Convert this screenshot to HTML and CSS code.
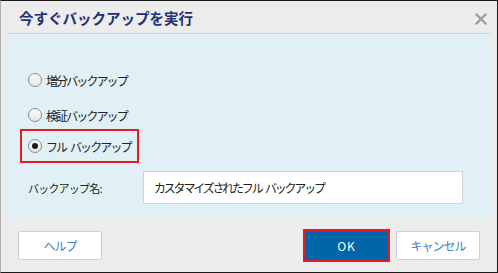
FILE: index.html
```html
<!DOCTYPE html>
<html lang="ja">
<head>
    <meta charset="UTF-8">
    <title>今すぐバックアップを実行</title>
    <link rel="stylesheet" href="styles.css">
</head>
<body>
    <div class="dialog">
        <div class="titlebar">
            <h1>今すぐバックアップを実行</h1>
            <span class="close">
                <svg width="12" height="12" viewBox="0 0 12 12">
                    <path d="M1.5 1.5 L10.5 10.5 M10.5 1.5 L1.5 10.5" stroke="#9a9a9a" stroke-width="2.2" stroke-linecap="square"/>
                </svg>
            </span>
        </div>

        <div class="content">
            <label class="opcion"><span class="radio"></span>増分バックアップ</label>
            <label class="opcion"><span class="radio"></span>検証バックアップ</label>
            <label class="opcion marcada"><span class="radio activo"></span>フル バックアップ</label>

            <div class="nombre">
                <span class="etiqueta">バックアップ名:</span>
                <div class="campo">カスタマイズされたフル バックアップ</div>
            </div>
        </div>

        <div class="footer">
            <button class="btn">ヘルプ</button>
            <div class="derecha">
                <div class="marco-ok"><button class="btn ok">OK</button></div>
                <button class="btn">キャンセル</button>
            </div>
        </div>
    </div>
</body>
</html>
```

FILE: styles.css
```css
body {
    margin: 0;
    font-family: "Noto Sans CJK JP", "Noto Sans", sans-serif;
}

.dialog {
    width: 496px;
    height: 271px;
    background-color: #ececec;
    border: 1px solid #1a1a1a;
    border-left-color: #b0b0b0;
    display: flex;
    flex-direction: column;
}

.titlebar {
    height: 32px;
    display: flex;
    align-items: center;
    justify-content: space-between;
    padding: 0 10px 0 18px;
}

.titlebar h1 {
    margin: 0;
    font-size: 14.5px;
    font-weight: 700;
    color: #23307a;
}

.close {
    display: flex;
    margin-top: 3px;
}

.content {
    margin: 0 6px 0 7px;
    height: 185px;
    background-color: #e1f0f5;
    border-top: 1px solid #d2d6d8;
    padding: 29px 0 0 12px;
    box-sizing: border-box;
}

.opcion {
    display: flex;
    width: max-content;
    align-items: center;
    font-size: 12px;
    letter-spacing: -1.9px;
    word-spacing: 3px;
    color: #222;
    height: 30px;
    padding: 0 7px 0 6px;
    margin-bottom: 1px;
    border: 2px solid transparent;
}

.radio {
    width: 12px;
    height: 12px;
    border: 1px solid #8c8c8c;
    border-radius: 50%;
    background: linear-gradient(#fcfcfc, #e6e6e6);
    margin-right: 4px;
    position: relative;
}

.radio.activo::after {
    content: "";
    position: absolute;
    left: 3px;
    top: 3px;
    width: 6px;
    height: 6px;
    border-radius: 50%;
    background-color: #1a1a1a;
}

.opcion.marcada {
    border-color: #e51a24;
    margin-top: -4px;
    padding-right: 6px;
}

.nombre {
    display: flex;
    align-items: center;
    margin-top: 8px;
    padding-left: 8px;
}

.etiqueta {
    width: 115px;
    font-size: 11px;
    letter-spacing: -0.8px;
    color: #222;
}

.campo {
    width: 308px;
    height: 31px;
    background-color: #fff;
    border: 1px solid #d4d4d4;
    display: flex;
    align-items: center;
    padding-left: 10px;
    font-size: 12px;
    letter-spacing: -2.2px;
    word-spacing: 3px;
    color: #222;
}

.footer {
    flex: 1;
    display: flex;
    align-items: center;
    justify-content: space-between;
    padding: 0 17px;
}

.derecha {
    display: flex;
    align-items: center;
    gap: 6px;
}

.btn {
    height: 29px;
    width: 84px;
    background-color: #fff;
    border: 1px solid #d0d0d0;
    border-radius: 2px;
    font-family: "Noto Sans CJK JP", "Noto Sans", sans-serif;
    font-size: 12px;
    letter-spacing: -1px;
    color: #3b83c4;
    padding: 0;
}

.marco-ok {
    border: 2px solid #e51a24;
    display: flex;
}

.btn.ok {
    width: 83px;
    height: 29px;
    background-color: #0066aa;
    border: 1px solid #0066aa;
    color: #fff;
    letter-spacing: 1px;
    border-radius: 0;
}
```
